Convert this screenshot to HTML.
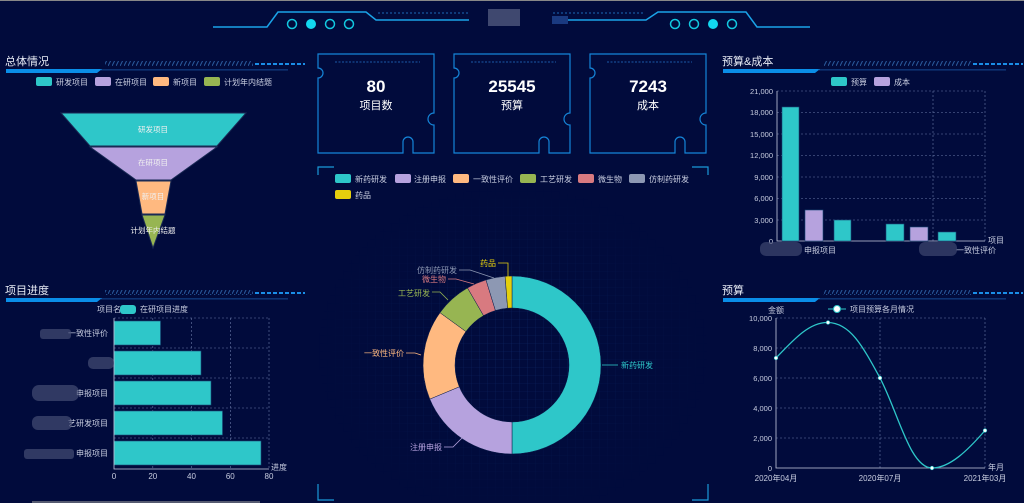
<!DOCTYPE html>
<html><head><meta charset="utf-8">
<style>
html,body{margin:0;padding:0;background:#010b3c;}
svg{display:block;font-family:"Liberation Sans","Noto Sans CJK SC",sans-serif;}
</style></head><body>
<svg width="1024" height="503" viewBox="0 0 1024 503" xmlns="http://www.w3.org/2000/svg">
<defs>
<pattern id="hatch" width="4" height="6" patternUnits="userSpaceOnUse"><path d="M0,6 L3,0" stroke="#2a5a9c" stroke-width="1"/></pattern>
<pattern id="grid" width="8" height="8" patternUnits="userSpaceOnUse"><path d="M8,0 V8 M0,8 H8" stroke="#0f2a6a" stroke-width="0.6" fill="none"/></pattern>
<radialGradient id="rg" cx="50%" cy="55%" r="50%"><stop offset="0" stop-color="#fff" stop-opacity="1"/><stop offset="1" stop-color="#fff" stop-opacity="0"/></radialGradient>
<mask id="gm"><rect x="318" y="170" width="390" height="330" fill="url(#rg)"/></mask>
</defs>
<rect width="1024" height="503" fill="#010b3c"/>
<rect width="1024" height="1" fill="#888"/>

<!-- header -->
<g fill="none" stroke="#1aa3e8" stroke-width="1.5">
<path d="M213,27 H267 L278,12 H366 L376,20 H469"/>
<path d="M553,20 H646 L658,12 H746 L757,27 H810"/>
</g>
<path d="M378,13 H470 M553,13 H645" stroke="#1a6ab8" stroke-width="1" stroke-dasharray="2,2"/>
<g stroke="#12c8e0" stroke-width="1.5" fill="none">
<circle cx="292" cy="24" r="4.5"/><circle cx="330" cy="24" r="4.5"/><circle cx="349" cy="24" r="4.5"/>
<circle cx="675" cy="24" r="4.5"/><circle cx="694" cy="24" r="4.5"/><circle cx="732" cy="24" r="4.5"/>
</g>
<circle cx="311" cy="24" r="5" fill="#12d8f0"/><circle cx="713" cy="24" r="5" fill="#12d8f0"/>
<rect x="488" y="9" width="32" height="17" fill="#5a6285" opacity="0.7"/>
<rect x="552" y="16" width="16" height="8" fill="#1a3a80"/>

<!-- section headers -->
<g font-size="11" fill="#e8ecf5">
<text x="5" y="65">总体情况</text>
<text x="5" y="294">项目进度</text>
<text x="722" y="65">预算&amp;成本</text>
<text x="722" y="294">预算</text>
</g>
<g>
<path d="M6,69 H102 L97,73 H6 Z" fill="#0a8ee8"/><rect x="100" y="69.5" width="188" height="0.8" fill="#1a5aa8"/><rect x="105" y="61" width="148" height="5" fill="url(#hatch)"/><path d="M255,64 h50" stroke="#1a8ee8" stroke-width="2" stroke-dasharray="4,2"/>
<path d="M6,298 H102 L97,302 H6 Z" fill="#0a8ee8"/><rect x="100" y="298.5" width="188" height="0.8" fill="#1a5aa8"/><rect x="105" y="290" width="148" height="5" fill="url(#hatch)"/><path d="M255,293 h50" stroke="#1a8ee8" stroke-width="2" stroke-dasharray="4,2"/>
<path d="M723,69 H820 L815,73 H723 Z" fill="#0a8ee8"/><rect x="818" y="69.5" width="188" height="0.8" fill="#1a5aa8"/><rect x="823" y="61" width="148" height="5" fill="url(#hatch)"/><path d="M973,64 h50" stroke="#1a8ee8" stroke-width="2" stroke-dasharray="4,2"/>
<path d="M723,298 H820 L815,302 H723 Z" fill="#0a8ee8"/><rect x="818" y="298.5" width="188" height="0.8" fill="#1a5aa8"/><rect x="823" y="290" width="148" height="5" fill="url(#hatch)"/><path d="M973,293 h50" stroke="#1a8ee8" stroke-width="2" stroke-dasharray="4,2"/>
</g>

<!-- funnel legend -->
<g font-size="8" fill="#c8cde0">
<rect x="36" y="77" width="16" height="9" rx="2" fill="#2ec7c9"/><text x="56" y="85">研发项目</text>
<rect x="95" y="77" width="16" height="9" rx="2" fill="#b6a2de"/><text x="115" y="85">在研项目</text>
<rect x="153" y="77" width="16" height="9" rx="2" fill="#ffb980"/><text x="173" y="85">新项目</text>
<rect x="204" y="77" width="16" height="9" rx="2" fill="#97b552"/><text x="224" y="85">计划年内结题</text>
</g>
<!-- funnel -->
<g stroke="#1a2a55" stroke-width="1">
<path d="M61,113 H246 L217,146 H90 Z" fill="#2ec7c9"/>
<path d="M90,147 H217 L171,180 H136 Z" fill="#b6a2de"/>
<path d="M136,181 H171 L165,214 H142 Z" fill="#ffb980"/>
<path d="M142,215 H165 L153,248 Z" fill="#97b552"/>
</g>
<g font-size="7.5" fill="#f0f0f0" text-anchor="middle">
<text x="153" y="132">研发项目</text><text x="153" y="165">在研项目</text><text x="153" y="199">新项目</text><text x="153" y="233">计划年内结题</text>
</g>

<!-- cards -->
<g fill="none" stroke="#1585d8" stroke-width="1.2">
<path d="M318,54 H434 V113 A6,6 0 0 0 434,125 V153 H413 V142 A5,5 0 0 0 403,142 V153 H318 V78 A5,5 0 0 0 318,68 Z"/>
<path d="M454,54 H570 V113 A6,6 0 0 0 570,125 V153 H549 V142 A5,5 0 0 0 539,142 V153 H454 V78 A5,5 0 0 0 454,68 Z"/>
<path d="M590,54 H706 V113 A6,6 0 0 0 706,125 V153 H685 V142 A5,5 0 0 0 675,142 V153 H590 V78 A5,5 0 0 0 590,68 Z"/>
</g>
<g stroke="#1a5aa8" stroke-dasharray="2,1.5"><path d="M335,62 H420 M471,62 H556 M607,62 H692"/></g>
<g fill="#fff" text-anchor="middle">
<text x="376" y="92" font-size="17" font-weight="bold">80</text><text x="376" y="109" font-size="11">项目数</text>
<text x="512" y="92" font-size="17" font-weight="bold">25545</text><text x="512" y="109" font-size="11">预算</text>
<text x="648" y="92" font-size="17" font-weight="bold">7243</text><text x="648" y="109" font-size="11">成本</text>
</g>

<!-- center frame -->
<rect x="318" y="170" width="390" height="330" fill="url(#grid)" mask="url(#gm)"/>
<g fill="none" stroke="#1a9ad8" stroke-width="1.2">
<path d="M318,175 V167 H334"/><path d="M692,167 H708 V175"/><path d="M318,484 V500 H334"/><path d="M692,500 H708 V484"/>
</g>
<g font-size="8" fill="#c8cde0">
<rect x="335" y="174" width="16" height="9" rx="2" fill="#2ec7c9"/><text x="355" y="182">新药研发</text>
<rect x="395" y="174" width="16" height="9" rx="2" fill="#b6a2de"/><text x="414" y="182">注册申报</text>
<rect x="453" y="174" width="16" height="9" rx="2" fill="#ffb980"/><text x="473" y="182">一致性评价</text>
<rect x="520" y="174" width="16" height="9" rx="2" fill="#97b552"/><text x="540" y="182">工艺研发</text>
<rect x="578" y="174" width="16" height="9" rx="2" fill="#d87a80"/><text x="598" y="182">微生物</text>
<rect x="629" y="174" width="16" height="9" rx="2" fill="#8d98b3"/><text x="649" y="182">仿制药研发</text>
<rect x="335" y="190" width="16" height="9" rx="2" fill="#e5cf0d"/><text x="355" y="198">药品</text>
</g>
<!-- donut -->
<g stroke="#0a1a48" stroke-width="0.5">
<path d="M512,276 A89,89 0 0 1 601,365 A89,89 0 0 1 512,454 L512,422 A57,57 0 0 0 569,365 A57,57 0 0 0 512,308 Z" fill="#2ec7c9"/>
<path d="M512,454 A89,89 0 0 1 429.8,399.1 L459.3,386.8 A57,57 0 0 0 512,422 Z" fill="#b6a2de"/>
<path d="M429.8,399.1 A89,89 0 0 1 440,312.7 L465.9,331.5 A57,57 0 0 0 459.3,386.8 Z" fill="#ffb980"/>
<path d="M440,312.7 A89,89 0 0 1 467.5,287.9 L483.5,315.6 A57,57 0 0 0 465.9,331.5 Z" fill="#97b552"/>
<path d="M467.5,287.9 A89,89 0 0 1 486,279.9 L495.4,310.5 A57,57 0 0 0 483.5,315.6 Z" fill="#d87a80"/>
<path d="M486,279.9 A89,89 0 0 1 505.1,276.3 L507.6,308.2 A57,57 0 0 0 495.4,310.5 Z" fill="#8d98b3"/>
<path d="M505.1,276.3 A89,89 0 0 1 512,276 L512,308 A57,57 0 0 0 507.6,308.2 Z" fill="#e5cf0d"/>
</g>
<g fill="none" stroke-width="0.8">
<path d="M602,365 H618" stroke="#2ec7c9"/>
<path d="M444,447 H453 L462,438" stroke="#b6a2de"/>
<path d="M406,353 H415 L421,355" stroke="#ffb980"/>
<path d="M432,292 H440 L448,300" stroke="#97b552"/>
<path d="M448,279 H456 L474,284" stroke="#d87a80"/>
<path d="M459,270 H470 L494,278" stroke="#8d98b3"/>
<path d="M498,263 H508 V277" stroke="#e5cf0d"/>
</g>
<g font-size="8">
<text x="621" y="368" fill="#2ec7c9">新药研发</text>
<text x="442" y="450" fill="#b6a2de" text-anchor="end">注册申报</text>
<text x="404" y="356" fill="#ffb980" text-anchor="end">一致性评价</text>
<text x="430" y="296" fill="#97b552" text-anchor="end">工艺研发</text>
<text x="446" y="282" fill="#d87a80" text-anchor="end">微生物</text>
<text x="457" y="273" fill="#8d98b3" text-anchor="end">仿制药研发</text>
<text x="496" y="266" fill="#e5cf0d" text-anchor="end">药品</text>
</g>

<!-- budget & cost bar chart -->
<g font-size="8" fill="#c8cde0">
<rect x="831" y="77" width="16" height="9" rx="2" fill="#2ec7c9"/><text x="851" y="85">预算</text>
<rect x="874" y="77" width="16" height="9" rx="2" fill="#b6a2de"/><text x="894" y="85">成本</text>
</g>
<g stroke="#6a7aa8" stroke-width="0.6" stroke-dasharray="2,2" fill="none">
<path d="M777,91 H985 M777,112.5 H985 M777,134 H985 M777,155.5 H985 M777,177 H985 M777,198.5 H985 M777,220 H985 M933,91 V241 M985,91 V241"/>
</g>
<path d="M777,91 V241 H985" stroke="#c8cde0" stroke-width="0.8" fill="none"/>
<g font-size="7.5" fill="#c8cde0" text-anchor="end">
<text x="773" y="94">21,000</text><text x="773" y="115">18,000</text><text x="773" y="137">15,000</text><text x="773" y="158">12,000</text><text x="773" y="180">9,000</text><text x="773" y="201">6,000</text><text x="773" y="223">3,000</text><text x="773" y="244">0</text>
</g>
<g stroke="#1a4a78" stroke-width="0.6">
<rect x="782" y="107" width="17" height="134" fill="#2ec7c9"/>
<rect x="805" y="210" width="18" height="31" fill="#b6a2de"/>
<rect x="834" y="220" width="17" height="21" fill="#2ec7c9"/>
<rect x="886" y="224" width="18" height="17" fill="#2ec7c9"/>
<rect x="910" y="227" width="18" height="14" fill="#b6a2de"/>
<rect x="938" y="232" width="18" height="9" fill="#2ec7c9"/>
</g>
<g font-size="8" fill="#c8cde0">
<text x="988" y="243">项目</text>
<text x="804" y="253">申报项目</text>
<text x="956" y="253">一致性评价</text>
</g>
<rect x="760" y="242" width="42" height="14" rx="6" fill="#4a5278" opacity="0.6"/>
<rect x="919" y="242" width="38" height="14" rx="6" fill="#4a5278" opacity="0.6"/>

<!-- progress chart -->
<g font-size="8" fill="#c8cde0">
<text x="97" y="312">项目名</text>
<rect x="120" y="305" width="16" height="9" rx="3" fill="#2ec7c9"/><text x="140" y="312">在研项目进度</text>
</g>
<g stroke="#6a7aa8" stroke-width="0.6" stroke-dasharray="2,2" fill="none">
<path d="M114,318 H269 M114,348 H269 M114,378 H269 M114,408 H269 M114,438 H269 M152.8,318 V469 M191.5,318 V469 M230.3,318 V469 M269,318 V469"/>
</g>
<g stroke="#1a4a78" stroke-width="0.6" fill="#2ec7c9">
<rect x="114" y="321" width="46.5" height="24"/>
<rect x="114" y="351" width="87" height="24"/>
<rect x="114" y="381" width="97" height="24"/>
<rect x="114" y="411" width="108.5" height="24"/>
<rect x="114" y="441" width="147" height="24"/>
</g>
<path d="M114,318 V469 H269" stroke="#c8cde0" stroke-width="0.8" fill="none"/>
<g font-size="8" fill="#c8cde0" text-anchor="middle">
<text x="114" y="479">0</text><text x="152.8" y="479">20</text><text x="191.5" y="479">40</text><text x="230.3" y="479">60</text><text x="269" y="479">80</text>
</g>
<g font-size="8" fill="#c8cde0" text-anchor="end">
<text x="108" y="336">一致性评价</text><text x="108" y="396">申报项目</text><text x="108" y="426">艺研发项目</text><text x="108" y="456">申报项目</text>
</g>
<text x="271" y="470" font-size="8" fill="#c8cde0">进度</text>
<g fill="#4a5278" opacity="0.65">
<rect x="40" y="329" width="31" height="10" rx="3"/><rect x="88" y="357" width="26" height="12" rx="5"/><rect x="32" y="385" width="47" height="16" rx="7"/><rect x="32" y="416" width="40" height="14" rx="6"/><rect x="24" y="449" width="50" height="10" rx="3"/>
</g>
<rect x="32" y="501" width="228" height="2" fill="#555a70"/>

<!-- budget line chart -->
<g font-size="8" fill="#c8cde0">
<text x="768" y="313">金额</text>
<path d="M828,309 H846" stroke="#2ec7c9" stroke-width="1"/><circle cx="837" cy="309" r="3.5" fill="#fff" stroke="#2ec7c9"/>
<text x="850" y="312">项目预算各月情况</text>
</g>
<g stroke="#6a7aa8" stroke-width="0.6" stroke-dasharray="2,2" fill="none">
<path d="M776,318 H985 M776,348 H985 M776,378 H985 M776,408 H985 M776,438 H985 M880,318 V468 M985,318 V468"/>
</g>
<path d="M776,318 V468 H985" stroke="#c8cde0" stroke-width="0.8" fill="none"/>
<g font-size="7.5" fill="#c8cde0" text-anchor="end">
<text x="772" y="321">10,000</text><text x="772" y="351">8,000</text><text x="772" y="381">6,000</text><text x="772" y="411">4,000</text><text x="772" y="441">2,000</text><text x="772" y="471">0</text>
</g>
<g font-size="8" fill="#c8cde0" text-anchor="middle">
<text x="776" y="481">2020年04月</text><text x="880" y="481">2020年07月</text><text x="985" y="481">2021年03月</text>
</g>
<text x="988" y="470" font-size="8" fill="#c8cde0">年月</text>
<path d="M776,358 C795,338 810,322 828,322.5 C850,323 862,345 880,378 C898,412 910,468 932,468 C950,468 968,450 985,430.5" fill="none" stroke="#2ec7c9" stroke-width="1.3"/>
<g fill="#fff" stroke="#2ec7c9" stroke-width="0.6">
<circle cx="776" cy="358" r="1.8"/><circle cx="828" cy="322.5" r="1.8"/><circle cx="880" cy="378" r="1.8"/><circle cx="932" cy="468" r="1.8"/><circle cx="985" cy="430.5" r="1.8"/>
</g>
</svg>
</body></html>
